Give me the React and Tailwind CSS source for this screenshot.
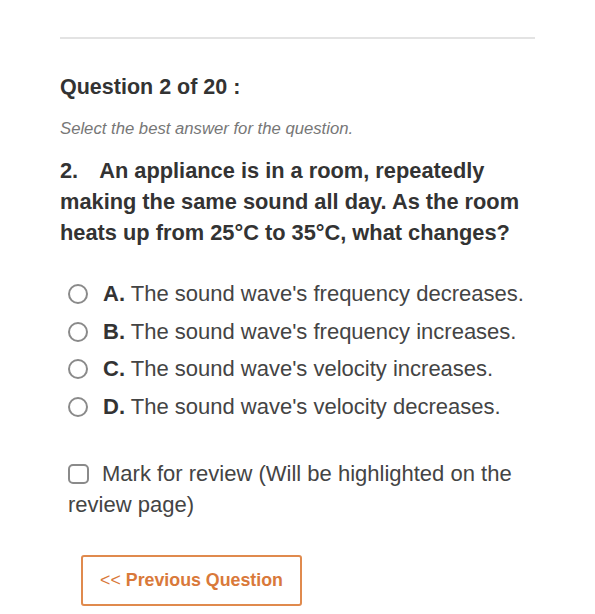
export default function App() {
  const opts = [
    ["A.", "The sound wave's frequency decreases."],
    ["B.", "The sound wave's frequency increases."],
    ["C.", "The sound wave's velocity increases."],
    ["D.", "The sound wave's velocity decreases."],
  ];
  return (
    <div className="w-[595px] h-[614px] bg-white overflow-hidden font-['Liberation_Sans',Arial,sans-serif] text-[#333]">
      <div className="px-[60px] pt-[37px]">
        <div className="h-[2px] bg-[#e3e3e3]" />
        <div className="mt-[36px] text-[21.5px] font-bold leading-[24px]">Question 2 of 20 :</div>
        <div className="mt-[20px] text-[16.7px] italic text-[#777] leading-[20px]">Select the best answer for the question.</div>
        <div className="mt-[16px] text-[21.8px] font-bold leading-[31px] text-[#333] whitespace-nowrap">
          2.<span className="inline-block w-[21px]" />An appliance is in a room, repeatedly<br />
          making the same sound all day. As the room<br />
          heats up from 25°C to 35°C, what changes?
        </div>
        <div className="mt-[34px] flex flex-col gap-[13.5px] pl-[8px]">
          {opts.map(([l, t]) => (
            <div key={l} className="flex items-center h-[24px]">
              <span className="w-[20px] h-[20px] rounded-full border-[2px] border-[#8a8a8a] shrink-0" />
              <span className="ml-[15px] text-[22px] leading-[24px] text-[#444] whitespace-nowrap">
                <b className="text-[#333]">{l}</b> {t}
              </span>
            </div>
          ))}
        </div>
        <div className="mt-[39px] pl-[8px] text-[22px] leading-[31px] text-[#444]">
          <span className="inline-block align-[-3px] w-[21px] h-[20px] rounded-[5px] border-[2px] border-[#8a8a8a] mr-[13px]" />
          Mark for review (Will be highlighted on the<br />review page)
        </div>
        <button className="mt-[35px] ml-[21px] w-[221px] h-[51px] rounded-[3px] border-[2px] border-[#e08a4d] text-[#d9793a] text-[17.8px] font-bold bg-white">
          <span className="font-normal">&lt;&lt;</span> Previous Question
        </button>
      </div>
    </div>
  );
}
